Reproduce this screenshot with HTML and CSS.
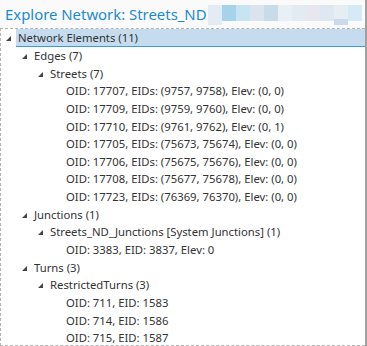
FILE: index.html
```html
<!DOCTYPE html>
<html lang="en">
<head>
<meta charset="UTF-8">
<meta name="viewport" content="width=device-width, initial-scale=1.0">
<link rel="stylesheet" href="styles.css">
<title>Explore Network</title>
</head>
<body>
<div class="panel">
  <div class="header">
    <span class="title">Explore Network: Streets_ND</span>
    <div class="blur">
      <span class="b1 tall"></span><span class="b2"></span><span class="b3"></span><span class="b4"></span>
      <span class="b5"></span><span class="b6"></span><span class="b7"></span><span class="b8"></span>
      <span class="b9"></span><span class="b10 tab"></span><span class="b11"></span>
    </div>
  </div>
  <div class="tree">
    <ul class="level">
      <li>
        <div class="row selected"><span class="arrow"></span><span class="label">Network Elements (11)</span></div>
        <ul class="level">
          <li>
            <div class="row"><span class="arrow"></span><span class="label">Edges (7)</span></div>
            <ul class="level">
              <li>
                <div class="row"><span class="arrow"></span><span class="label">Streets (7)</span></div>
                <ul class="level">
                  <li><div class="row leaf"><span class="label">OID: 17707, EIDs: (9757, 9758), Elev: (0, 0)</span></div></li>
                  <li><div class="row leaf"><span class="label">OID: 17709, EIDs: (9759, 9760), Elev: (0, 0)</span></div></li>
                  <li><div class="row leaf"><span class="label">OID: 17710, EIDs: (9761, 9762), Elev: (0, 1)</span></div></li>
                  <li><div class="row leaf"><span class="label">OID: 17705, EIDs: (75673, 75674), Elev: (0, 0)</span></div></li>
                  <li><div class="row leaf"><span class="label">OID: 17706, EIDs: (75675, 75676), Elev: (0, 0)</span></div></li>
                  <li><div class="row leaf"><span class="label">OID: 17708, EIDs: (75677, 75678), Elev: (0, 0)</span></div></li>
                  <li><div class="row leaf"><span class="label">OID: 17723, EIDs: (76369, 76370), Elev: (0, 0)</span></div></li>
                </ul>
              </li>
            </ul>
          </li>
          <li>
            <div class="row"><span class="arrow"></span><span class="label">Junctions (1)</span></div>
            <ul class="level">
              <li>
                <div class="row"><span class="arrow"></span><span class="label">Streets_ND_Junctions [System Junctions] (1)</span></div>
                <ul class="level">
                  <li><div class="row leaf"><span class="label">OID: 3383, EID: 3837, Elev: 0</span></div></li>
                </ul>
              </li>
            </ul>
          </li>
          <li>
            <div class="row"><span class="arrow"></span><span class="label">Turns (3)</span></div>
            <ul class="level">
              <li>
                <div class="row"><span class="arrow"></span><span class="label">RestrictedTurns (3)</span></div>
                <ul class="level">
                  <li><div class="row leaf"><span class="label">OID: 711, EID: 1583</span></div></li>
                  <li><div class="row leaf"><span class="label">OID: 714, EID: 1586</span></div></li>
                  <li><div class="row leaf"><span class="label">OID: 715, EID: 1587</span></div></li>
                </ul>
              </li>
            </ul>
          </li>
        </ul>
      </li>
    </ul>
  </div>
</div>
</body>
</html>
```
FILE: styles.css
```css
body {
  margin: 0;
  font-family: "Noto Sans", "Open Sans", sans-serif;
  background: #fff;
}
.panel {
  width: 367px;
  height: 346px;
  box-sizing: border-box;
  border-right: 2px solid #a0a0a0;
  display: flex;
  flex-direction: column;
}
.header {
  height: 28px;
  background: #fafafa;
  display: flex;
  align-items: flex-start;
  padding-left: 5px;
}
.title {
  font-size: 14.9px;
  line-height: 28px;
  color: #1b8ad3;
  white-space: nowrap;
}
.blur {
  display: flex;
  margin-top: 5px;
  margin-left: 1px;
  height: 16px;
}
.blur span {
  width: 14px;
  height: 16px;
}
.blur .tall { height: 20px; }
.blur .tab { height: 20px; }
.b1 { background: #e3ecf5; }
.b2 { background: #a5d4ea; }
.b3 { background: #c6e4f2; }
.b4 { background: #dbe3ee; }
.b5 { background: #c8dbea; }
.b6 { background: #e9f0f5; }
.b7 { background: #e3ebf2; }
.b8 { background: #e8e6ee; }
.b9 { background: #dde8f2; }
.b10 { background: linear-gradient(#e6eef4 70%, #c8daec 70%); }
.b11 { background: #d4eaf6; }
.tree {
  flex: 1;
  border-top: 1px dashed #b4b4b4;
  border-left: 1px dashed #b4b4b4;
  border-bottom: 1px dashed #b4b4b4;
  overflow: hidden;
}
.level {
  list-style: none;
  margin: 0;
  padding: 0;
}
.level .level {
  padding-left: 16px;
}
.tree > .level {
  padding-left: 0;
}
.row {
  height: 17.65px;
  font-size: 11.3px;
  color: #333;
  white-space: nowrap;
  display: flex;
  align-items: stretch;
  padding-left: 5px;
}
.row.leaf {
  padding-left: 15px;
}
.label {
  display: flex;
  align-items: center;
  padding-left: 2px;
}
.arrow {
  align-self: center;
  width: 0;
  height: 0;
  border-left: 5px solid transparent;
  border-bottom: 5px solid #444;
  margin-right: 5px;
  margin-top: 2px;
}
.selected {
  margin-top: -1px;
  height: 18.65px;
}
.selected .label {
  flex: 1;
  box-sizing: border-box;
  background: #c5dcef;
  border-top: 1px dotted #5a93c4;
  border-bottom: 1px solid #3d9bd9;
}
```
